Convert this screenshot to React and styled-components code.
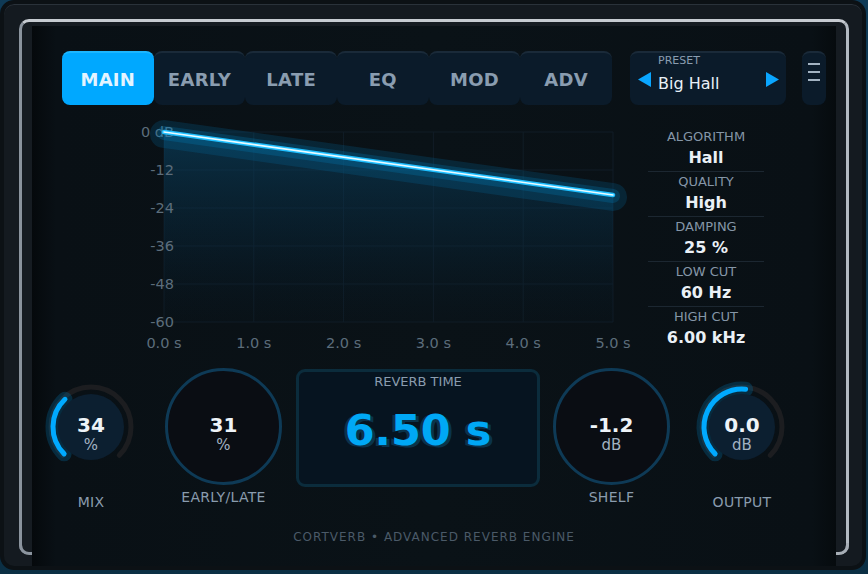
import React from 'react';
import styled, { createGlobalStyle } from 'styled-components';

const Global = createGlobalStyle`
  html, body { margin: 0; padding: 0; }
  body {
    width: 868px; height: 574px; overflow: hidden;
    background: linear-gradient(180deg, #0f3a56 0%, #0b2f44 100%);
    font-family: "DejaVu Sans", Verdana, sans-serif;
  }
`;

const Shell = styled.div`
  box-sizing: border-box;
  width: 866px; height: 570px;
  border: 4px solid #0c1115;
  border-radius: 14px;
  background: #141a20;
  box-shadow: inset 0 1px 0 #2a323a;
  padding: 15px 13px 11px 15px;
  display: flex;
`;

const Frame = styled.div`
  position: relative;
  flex: 1;
  display: flex;
  align-items: flex-start;
  border: 3px solid;
  border-bottom: 0;
  border-color: #c6cbd1 #b3bac2 #8b949e #8b949e;
  border-radius: 10px;
  background: #161c22;
  &::before, &::after {
    content: '';
    position: absolute;
    bottom: 0;
    width: 13px; height: 12px;
    box-sizing: border-box;
    border-bottom: 3px solid #8b949e;
  }
  &::before {
    left: -3px;
    border-left: 3px solid #8b949e;
    border-bottom-left-radius: 10px;
  }
  &::after {
    right: -3px;
    border-right: 3px solid #a7aeb6;
    border-bottom-color: #a7aeb6;
    border-bottom-right-radius: 10px;
  }
`;

const Panel = styled.div`
  position: relative;
  flex: 1;
  box-sizing: border-box;
  height: 540px;
  margin: 4px 10px 0;
  display: flex;
  flex-direction: column;
  padding-top: 25px;
  background: linear-gradient(90deg, #05090c 0%, #091015 3%, #0a1217 50%, #091015 97%, #060b0e 100%);
`;

const TopBar = styled.div`
  display: flex;
  height: 54px;
  padding-left: 30px;
`;

const Tabs = styled.div`
  display: flex;
  width: 550px;
`;

const Tab = styled.div`
  flex: 1;
  box-sizing: border-box;
  display: flex; align-items: center; justify-content: center;
  border-radius: 8px;
  font-weight: 700; font-size: 18px; letter-spacing: 0.3px;
  background: ${p => (p.$active ? '#00a8ff' : '#0b1b2a')};
  color: ${p => (p.$active ? '#e4f4ff' : '#8a9db0')};
  border-top: 2px solid ${p => (p.$active ? '#1cb6ff' : '#1a2a39')};
`;

const Preset = styled.div`
  box-sizing: border-box;
  width: 156px;
  margin-left: 18px;
  display: flex; align-items: center;
  padding: 0 7px 0 8px;
  border-radius: 8px;
  background: #0b1b2a;
  border-top: 2px solid #1a2a39;
`;

const PresetText = styled.div`
  flex: 1;
  align-self: stretch;
  display: flex; flex-direction: column;
  padding: 1px 0 0 7px;
`;

const PresetLabel = styled.div`
  font-size: 11px; line-height: 13px; color: #8a9db0;
`;

const PresetName = styled.div`
  margin-top: 7px;
  font-size: 16px; line-height: 20px; color: #e8f0f8;
`;

const MenuButton = styled.div`
  box-sizing: border-box;
  width: 24px; margin-left: 16px;
  border-radius: 8px;
  background: #0b1b2a;
  border-top: 2px solid #1a2a39;
  display: flex; flex-direction: column; align-items: center;
  padding-top: 10px; gap: 6px;
`;

const MenuLine = styled.div`
  width: 12px; height: 2px; background: #a3b3c2;
`;

const GraphRow = styled.div`
  display: flex;
  align-items: flex-start;
  margin-top: 10px;
  height: 240px;
  padding-left: 98px;
`;

const Info = styled.div`
  width: 116px;
  margin: 12px 0 0 8px;
  display: flex; flex-direction: column;
`;

const InfoRow = styled.div`
  padding: 2px 0;
  text-align: center;
  border-bottom: 1px solid ${p => (p.$last ? 'transparent' : '#1c2731')};
`;

const InfoLabel = styled.div`
  font-size: 13px; line-height: 16px; color: #8596a7;
`;

const InfoValue = styled.div`
  margin-top: 2px;
  font-size: 16px; line-height: 22px; font-weight: 700; color: #eaf0f6;
`;

const KnobRow = styled.div`
  display: flex;
  align-items: flex-start;
  margin-top: 13px;
  height: 140px;
  padding-left: 10px;
`;

const Column = styled.div`
  width: ${p => p.$w}px;
  margin-left: ${p => p.$ml || 0}px;
  display: flex; flex-direction: column; align-items: center;
`;

const KnobBox = styled.div`
  position: relative;
  width: 98px; height: 98px;
  margin-top: 10px;
  display: flex; justify-content: center;
  & > svg { position: absolute; left: 0; top: 0; }
`;

const Readout = styled.div`
  position: relative;
  display: flex; flex-direction: column; align-items: center;
  padding-top: ${p => p.$pt}px;
`;

const Value = styled.div`
  font-size: 20px; line-height: 22px; font-weight: 700; color: #eef3f8;
`;

const Unit = styled.div`
  font-size: 15px; line-height: 18px; color: #a2b2c2;
`;

const Label = styled.div`
  margin-top: ${p => p.$mt}px;
  font-size: 14px; line-height: 18px; letter-spacing: 0.3px;
  color: #8a9cae;
`;

const Ring = styled.div`
  box-sizing: border-box;
  width: 117px; height: 117px;
  border-radius: 50%;
  border: 3px solid #0e3a56;
  background: #0a0d13;
  display: flex; justify-content: center;
`;

const TimeBox = styled.div`
  box-sizing: border-box;
  width: 244px; height: 118px;
  margin: 1px 0 0 14px;
  border: 3px solid #0b2c3c;
  border-radius: 9px;
  background: #061420;
  display: flex; flex-direction: column; align-items: center;
  padding-top: 2px;
`;

const TimeLabel = styled.div`
  font-size: 13px; line-height: 16px; color: #8a9cae;
`;

const TimeValue = styled.div`
  margin-top: 15px;
  font-size: 43px; line-height: 50px; font-weight: 700;
  color: #00a8f5;
  text-shadow: -3px 1px 0 #0b334a, 3px 2px 0 #0b334a;
`;

const Footer = styled.div`
  margin-top: 21px;
  text-align: center;
  font-size: 12px; line-height: 16px; letter-spacing: 1px;
  color: #4b5a68;
`;

function polar(cx, cy, r, a) {
  const rad = (a * Math.PI) / 180;
  return [cx + r * Math.sin(rad), cy - r * Math.cos(rad)];
}
function arc(cx, cy, r, a0, a1) {
  const [x0, y0] = polar(cx, cy, r, a0);
  const [x1, y1] = polar(cx, cy, r, a1);
  const large = a1 - a0 > 180 ? 1 : 0;
  return `M${x0.toFixed(2)} ${y0.toFixed(2)} A${r} ${r} 0 ${large} 1 ${x1.toFixed(2)} ${y1.toFixed(2)}`;
}

function KnobDial({ frac }) {
  const end = -135 + frac * 270;
  return (
    <svg width="98" height="98" viewBox="0 0 98 98">
      <path d={arc(49, 49, 40, -135, 135)} fill="none" stroke="#1c1d20" strokeWidth="5" strokeLinecap="round" />
      <path d={arc(49, 49, 38, -135, end)} fill="none" stroke="rgba(0,140,210,0.22)" strokeWidth="15" strokeLinecap="round" />
      <circle cx="49" cy="49" r="33" fill="#0c1f30" />
      <path d={arc(49, 49, 38, -135, end)} fill="none" stroke="#00aaff" strokeWidth="5" strokeLinecap="round" />
    </svg>
  );
}

function Knob({ frac, value, unit, label, ml }) {
  return (
    <Column $w={98} $ml={ml}>
      <KnobBox>
        <KnobDial frac={frac} />
        <Readout $pt={36}>
          <Value>{value}</Value>
          <Unit>{unit}</Unit>
        </Readout>
      </KnobBox>
      <Label $mt={17}>{label}</Label>
    </Column>
  );
}

function BigDial({ value, unit, label, ml }) {
  return (
    <Column $w={117} $ml={ml}>
      <Ring>
        <Readout $pt={43}>
          <Value>{value}</Value>
          <Unit>{unit}</Unit>
        </Readout>
      </Ring>
      <Label $mt={3}>{label}</Label>
    </Column>
  );
}

const X0 = 34, X1 = 483, Y0 = 17, Y1 = 207;
const yOf = db => Y0 + (-db / 60) * (Y1 - Y0);
const xOf = t => X0 + (t / 5) * (X1 - X0);

function DecayGraph() {
  const endY = 80;
  const axis = { fill: '#5c6d7b', fontSize: 14.5, fontFamily: '"DejaVu Sans", Verdana, sans-serif' };
  return (
    <svg width="510" height="240" viewBox="0 0 510 240">
      <defs>
        <linearGradient id="fillg" x1="0" y1="0" x2="0" y2="1">
          <stop offset="0" stopColor="#0a4a6e" stopOpacity="0.55" />
          <stop offset="0.6" stopColor="#08304a" stopOpacity="0.3" />
          <stop offset="1" stopColor="#061a28" stopOpacity="0.1" />
        </linearGradient>
      </defs>
      {[0, -12, -24, -36, -48, -60].map(d => (
        <line key={d} x1={X0} x2={X1} y1={yOf(d)} y2={yOf(d)} stroke="#111d27" strokeWidth="1" />
      ))}
      {[0, 1, 2, 3, 4, 5].map(t => (
        <line key={t} x1={xOf(t)} x2={xOf(t)} y1={Y0} y2={Y1} stroke="#111d27" strokeWidth="1" />
      ))}
      <polygon points={`${X0},${Y0} ${X1},${endY} ${X1},${Y1} ${X0},${Y1}`} fill="url(#fillg)" />
      {[0, -12, -24, -36, -48, -60].map(d => (
        <text key={d} x="44" y={yOf(d) + 5} textAnchor="end" {...axis}>{d === 0 ? '0 dB' : d}</text>
      ))}
      {[0, 1, 2, 3, 4, 5].map(t => (
        <text key={t} x={xOf(t)} y="233" textAnchor="middle" {...axis}>{t.toFixed(1)} s</text>
      ))}
      <line x1={X0} y1={Y0 + 2} x2={X1} y2={endY + 2} stroke="rgba(0,120,180,0.2)" strokeWidth="28" strokeLinecap="round" />
      <line x1={X0} y1={Y0 + 1} x2={X1} y2={endY + 1} stroke="rgba(0,150,220,0.2)" strokeWidth="14" strokeLinecap="round" />
      <line x1={X0} y1={Y0} x2={X1} y2={endY} stroke="#1fbfff" strokeWidth="4.5" strokeLinecap="round" />
      <line x1={X0} y1={Y0} x2={X1} y2={endY} stroke="#e8fbff" strokeWidth="1.6" strokeLinecap="round" />
    </svg>
  );
}

const Arrow = ({ dir }) => (
  <svg width="13" height="15" viewBox="0 0 13 15">
    {dir === 'left'
      ? <polygon points="13,0 13,15 0,7.5" fill="#0aa6ff" />
      : <polygon points="0,0 0,15 13,7.5" fill="#0aa6ff" />}
  </svg>
);

const info = [
  ['ALGORITHM', 'Hall'],
  ['QUALITY', 'High'],
  ['DAMPING', '25 %'],
  ['LOW CUT', '60 Hz'],
  ['HIGH CUT', '6.00 kHz'],
];

export default function App() {
  return (
    <>
      <Global />
      <Shell>
        <Frame>
          <Panel>
            <TopBar>
              <Tabs>
                {['MAIN', 'EARLY', 'LATE', 'EQ', 'MOD', 'ADV'].map((t, i) => (
                  <Tab key={t} $active={i === 0}>{t}</Tab>
                ))}
              </Tabs>
              <Preset>
                <Arrow dir="left" />
                <PresetText>
                  <PresetLabel>PRESET</PresetLabel>
                  <PresetName>Big Hall</PresetName>
                </PresetText>
                <Arrow dir="right" />
              </Preset>
              <MenuButton>
                <MenuLine /><MenuLine /><MenuLine />
              </MenuButton>
            </TopBar>
            <GraphRow>
              <DecayGraph />
              <Info>
                {info.map(([l, v], i) => (
                  <InfoRow key={l} $last={i === info.length - 1}>
                    <InfoLabel>{l}</InfoLabel>
                    <InfoValue>{v}</InfoValue>
                  </InfoRow>
                ))}
              </Info>
            </GraphRow>
            <KnobRow>
              <Knob frac={0.34} value="34" unit="%" label="MIX" />
              <BigDial ml={25} value="31" unit="%" label="EARLY/LATE" />
              <TimeBox>
                <TimeLabel>REVERB TIME</TimeLabel>
                <TimeValue>6.50 s</TimeValue>
              </TimeBox>
              <BigDial ml={13} value="-1.2" unit="dB" label="SHELF" />
              <Knob ml={23} frac={0.52} value="0.0" unit="dB" label="OUTPUT" />
            </KnobRow>
            <Footer>CORTVERB • ADVANCED REVERB ENGINE</Footer>
          </Panel>
        </Frame>
      </Shell>
    </>
  );
}
